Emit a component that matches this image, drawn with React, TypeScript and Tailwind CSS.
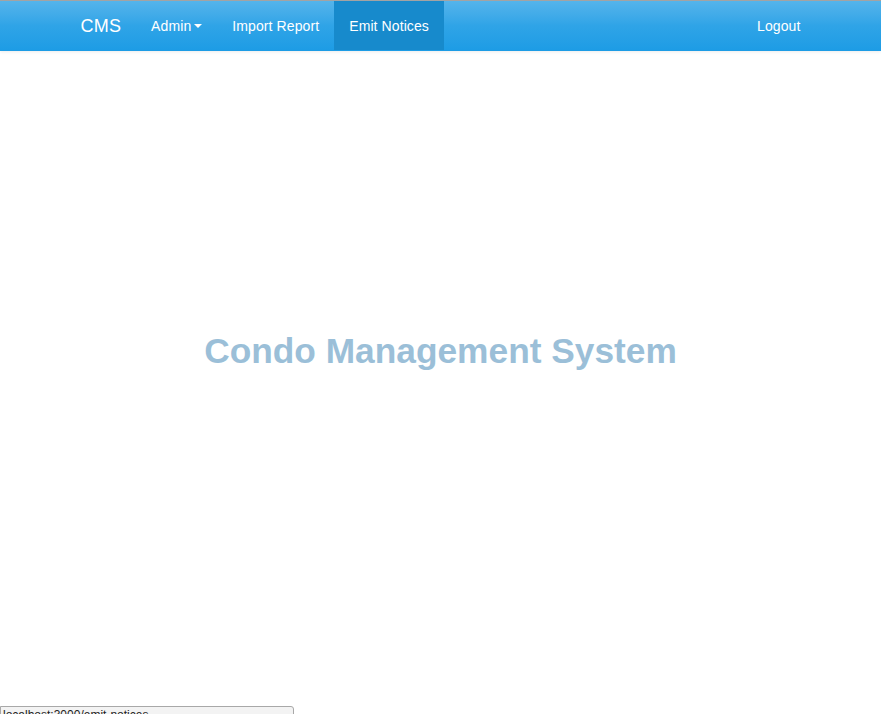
import React from 'react';

const navLinks = [
    { label: 'Import Report', active: false },
    { label: 'Emit Notices', active: true },
];

const App = () => {
    return (
        <div className="relative h-screen overflow-hidden bg-white" style={{ fontFamily: '"Liberation Sans", Arial, sans-serif' }}>
            <nav className="border-t border-t-[#a3a3a3] border-b border-b-[#1d9ce5] bg-gradient-to-b from-[#54b4eb] via-[#2fa4e7] to-[#1d9ce5] shadow-[0_1px_3px_rgba(0,0,0,0.08)]">
                <div className="mx-auto flex h-[49px] w-[750px] items-stretch justify-between px-[15px] text-white">
                    <div className="flex items-stretch">
                        <a className="-ml-[15px] flex items-center px-[15px] text-[18px] leading-[20px] tracking-[0.2px]">CMS</a>
                        <a className="flex items-center px-[15px] text-[14px] leading-[20px] tracking-[0.1px]">
                            Admin
                            <span className="ml-[3px] inline-block h-0 w-0 border-x-[4px] border-t-[4px] border-x-transparent border-t-white" />
                        </a>
                        {navLinks.map(link => (
                            <a
                                key={link.label}
                                className={`flex items-center px-[15px] text-[14px] leading-[20px] tracking-[0.1px] ${link.active ? 'bg-[#178acc]' : ''}`}
                            >
                                {link.label}
                            </a>
                        ))}
                    </div>
                    <a className="-mr-[15px] flex items-center px-[15px] text-[14px] leading-[20px] tracking-[0.1px]">Logout</a>
                </div>
            </nav>

            <div className="flex h-[600px] items-center justify-center">
                <h1 className="text-[35.3px] font-bold leading-[40px] text-[#9bbfd8]">Condo Management System</h1>
            </div>

            {/* browser status bar peeking in at the bottom */}
            <div className="absolute left-0 top-[706px] h-[20px] w-[294px] rounded-tr-[3px] border border-[#a8a8a8] bg-[#f3f3f3] pl-[2px] text-[12px] leading-[16px] text-[#222]">
                localhost:3000/emit-notices
            </div>
        </div>
    );
};

export default App;
